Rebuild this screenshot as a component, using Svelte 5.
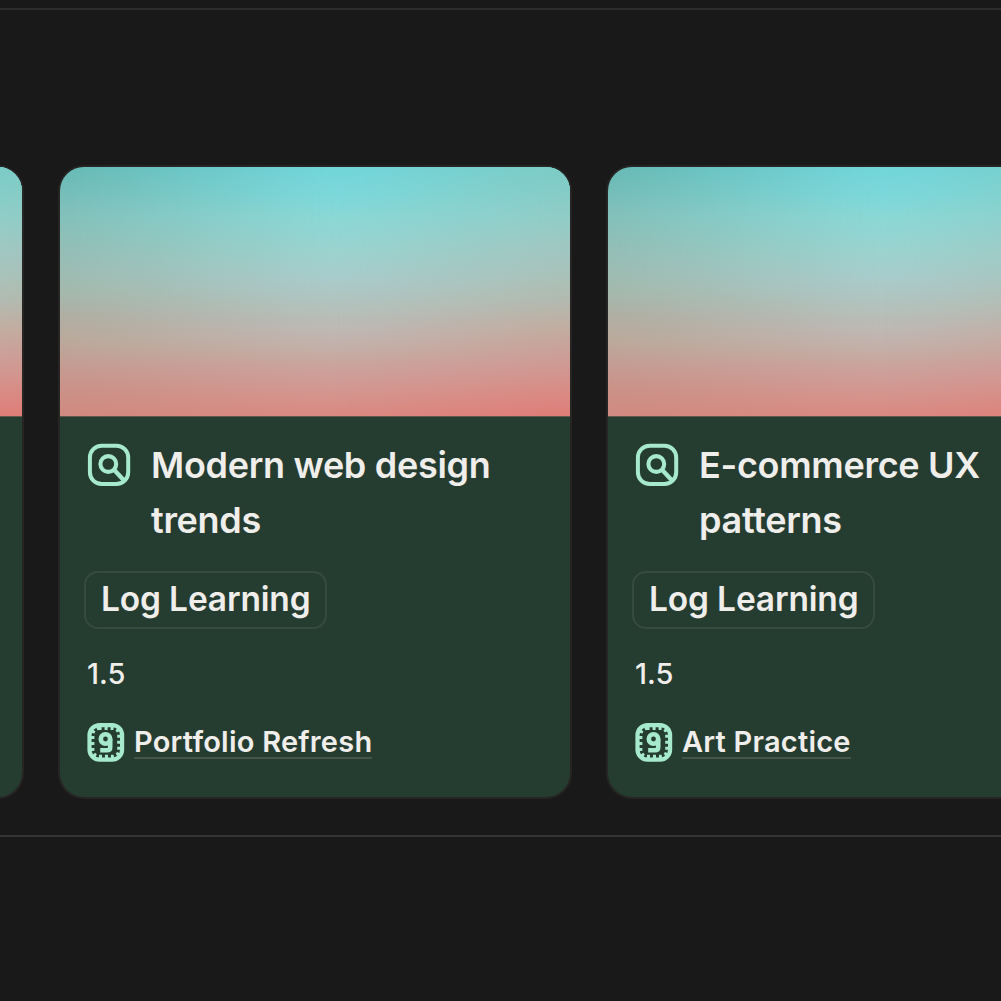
<script>
    let cards = [
        { title: "Modern web design trends", tag: "Log Learning", hours: "1.5", project: "Portfolio Refresh" },
        { title: "E-commerce UX patterns", tag: "Log Learning", hours: "1.5", project: "Art Practice" },
    ];
</script>

{#snippet cover()}
    <div class="cover">
        <div class="shade middle"></div>
        <div class="shade right"></div>
    </div>
{/snippet}

<div class="page">
    <div class="gallery">
        <div class="card">{@render cover()}</div>
        {#each cards as card}
            <div class="card">
                {@render cover()}
                <div class="body">
                    <div class="heading">
                        <svg class="search-icon" viewBox="0 0 44 44" fill="none" stroke="#a6e9cc">
                            <rect x="2.9" y="2.7" width="38.3" height="38.3" rx="11.8" stroke-width="4" />
                            <circle cx="21.3" cy="21" r="7.9" stroke-width="4.1" />
                            <path d="M26.8 26.6l10 10.6" stroke-width="4.4" />
                        </svg>
                        <h2>{card.title}</h2>
                    </div>
                    <div><span class="tag">{card.tag}</span></div>
                    <div class="hours">{card.hours}</div>
                    <div class="project">
                        <svg class="project-icon" viewBox="0 0 38 39" fill="none" stroke="#a6e9cc">
                            <rect x="2.5" y="2.1" width="32.6" height="34.6" rx="10" stroke-width="4.2" />
                            <rect x="5.6" y="5.3" width="26.4" height="28.2" rx="6" stroke-width="3.6" stroke-dasharray="3 3" />
                            <circle cx="18.5" cy="16" r="4.7" stroke-width="4.6" />
                            <path d="M23.2 16v8.2q0 3-3 3h-7" stroke-width="4.6" />
                        </svg>
                        <span>{card.project}</span>
                    </div>
                </div>
            </div>
        {/each}
    </div>
</div>

<style>
    :global(body) {
        background: #191919;
    }

    .page {
        box-sizing: border-box;
        height: 1001px;
        padding-top: 7.5px;
        overflow: hidden;
        background: #191919;
        color: #f0eeeb;
        font-family: Inter, "Liberation Sans", sans-serif;
    }

    .gallery {
        box-sizing: border-box;
        height: 829px;
        padding-top: 157.5px;
        border-top: 2px solid #2c2c2c;
        border-bottom: 2px solid #343434;
        display: flex;
        gap: 38px;
        margin-left: -488px;
        width: 1606px;
    }

    .card {
        flex: 0 0 510px;
        height: 630px;
        border-radius: 24px;
        overflow: hidden;
        background: #253c30;
        box-shadow: 0 0 0 2px #262524;
    }

    .cover {
        display: grid;
        height: 249px;
        border-bottom: 1px solid #62594c;
        background: linear-gradient(#67bab6, #84c1bb 20%, #9bbdb4 40%, #a4b9ad 50%, #b1afa3 60%, #bba99c 70%, #c59c92 80%, #cb9187 90%, #d18a81);
    }

    .shade {
        grid-area: 1 / 1;
    }

    .middle {
        background: linear-gradient(#71d6da, #7dd8da 12%, #8ad8d6 20%, #9bd3cf 34%, #a8cccc 44%, #b3c2bd 56%, #c1b5b0 68%, #c4aea6 74%, #cba39d 80%, #d49690 90%, #da8981);
        mask-image: linear-gradient(to right, transparent, rgba(0, 0, 0, 0.2) 12%, rgba(0, 0, 0, 0.54) 29%, rgba(0, 0, 0, 0.88) 46%, #000 56%);
    }

    .right {
        background: linear-gradient(#7ccbc5, #90ccc6 20%, #9fc6c1 32%, #a9c1b8 44%, #b3b9ae 54%, #c1ada1 64%, #cb9f97 75%, #d2958f 83%, #da8983 91%, #df7d77);
        mask-image: linear-gradient(to right, transparent 54%, rgba(0, 0, 0, 0.12) 62%, rgba(0, 0, 0, 0.5) 78%, rgba(0, 0, 0, 0.88) 93%, #000);
    }

    .body {
        padding: 20px 27px 0;
    }

    .heading {
        display: flex;
        gap: 20px;
    }

    .search-icon {
        flex: none;
        width: 44px;
        height: 44px;
        margin-top: 6px;
    }

    h2 {
        margin: 1px 0 0;
        font-size: 36px;
        line-height: 55px;
        font-weight: 600;
        letter-spacing: -0.3px;
        font-feature-settings: "calt" 0;
    }

    .tag {
        display: inline-block;
        box-sizing: border-box;
        height: 58px;
        margin: 23px 0 0 -3px;
        padding: 0 15px;
        border: 2px solid #364b3f;
        border-radius: 14px;
        font-size: 33.5px;
        line-height: 53px;
        font-weight: 600;
        letter-spacing: -0.16px;
    }

    .hours {
        margin-top: 25px;
        font-size: 29px;
        line-height: 40px;
        font-weight: 500;
    }

    .project {
        display: flex;
        align-items: center;
        gap: 9px;
        margin-top: 29px;
        font-size: 29px;
        line-height: 33px;
        font-weight: 600;
        letter-spacing: 0.22px;
    }

    .project span {
        height: 32px;
        border-bottom: 2px solid #455649;
        margin-top: -2px;
        line-height: 34px;
    }

    .project-icon {
        width: 38px;
        height: 39px;
    }
</style>
